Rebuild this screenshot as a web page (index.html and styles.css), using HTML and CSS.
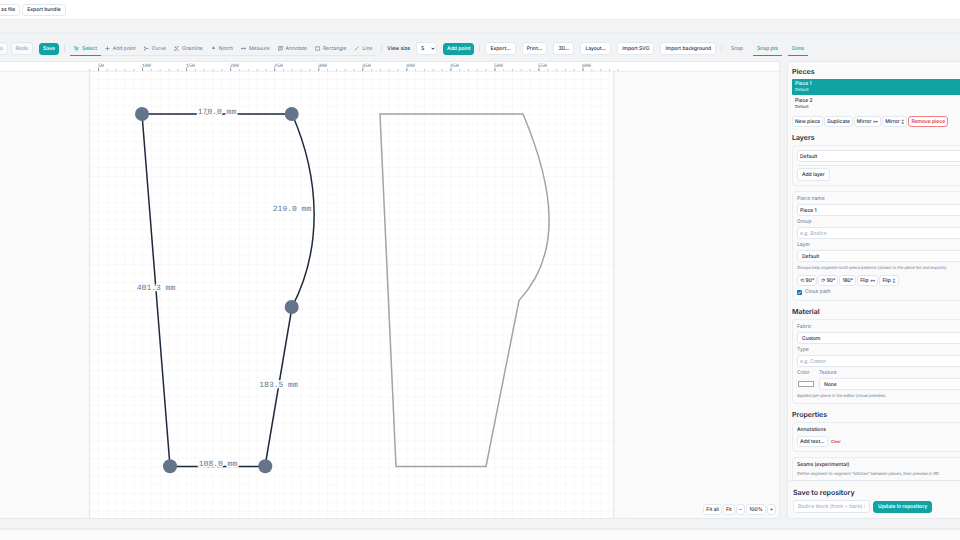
FILE: index.html
```html
<!DOCTYPE html>
<html lang="en">
<head>
<meta charset="utf-8">
<title>Pattern editor</title>
<link rel="stylesheet" href="styles.css">
</head>
<body>
<div class="app">
  <header class="topbar">
    <button class="btn">Save as file</button>
    <button class="btn">Export bundle</button>
  </header>
  <main class="editor">
    <div class="toolbar">
      <button class="btn btn-lg" disabled>Undo</button>
      <button class="btn btn-lg" disabled>Redo</button>
      <button class="btn btn-primary">Save</button>
      <span class="sep"></span>
      <nav class="tools">
        <button class="tool active"><svg viewBox="0 0 12 12"><path d="M1 1l3.500 9.500 1.800-4 4.200-1.700zM6.500 6.500l4 4"/></svg>Select</button>
        <button class="tool"><svg viewBox="0 0 12 12"><path d="M6 1v10M1 6h10"/></svg>Add point</button>
        <button class="tool"><svg viewBox="0 0 12 12"><path d="M1 1.500c1 3 3 4.500 10 4.500M1 10.500c1-3 3-4.500 6-4.500M1 1.500v3M1 10.500v-3"/></svg>Curve</button>
        <button class="tool"><svg viewBox="0 0 12 12"><path d="M2 11L10 1M2 2l3 2M7 9l3 1.500M1 11h3M8 1h3M3 2v3M9 7v3"/></svg>Grainline</button>
        <button class="tool"><svg viewBox="0 0 12 12"><path class="solid" d="M6 2l2.500 4h-5z"/></svg>Notch</button>
        <button class="tool"><svg viewBox="0 0 12 12"><path d="M1 6h10M3.500 3.500L1 6l2.500 2.500M8.500 3.500L11 6 8.500 8.500"/></svg>Measure</button>
        <button class="tool"><svg viewBox="0 0 12 12"><path d="M1 1h10v8H5l-3 2.500V9H1zM3.500 4h5M3.500 6.300h3"/></svg>Annotate</button>
        <button class="tool"><svg viewBox="0 0 12 12"><path d="M.7 2h10.600v8H.7z"/></svg>Rectangle</button>
        <button class="tool"><svg viewBox="0 0 12 12"><path d="M1.500 10.500l9-9"/></svg>Line</button>
      </nav>
      <span class="sep"></span>
      <label class="strong" for="size">View size</label>
      <div class="size"><select id="size"><option>S</option></select><svg viewBox="0 0 8 6"><path d="M1 1.500l3 3 3-3"/></svg></div>
      <button class="btn btn-primary">Add point</button>
      <span class="sep"></span>
      <button class="btn btn-lg">Export...</button>
      <button class="btn btn-lg">Print...</button>
      <button class="btn btn-lg">3D...</button>
      <button class="btn btn-lg">Layout...</button>
      <button class="btn btn-lg">Import SVG</button>
      <button class="btn btn-lg">Import background</button>
      <span class="sep"></span>
      <button class="toggle">Snap</button>
      <button class="toggle on">Snap pts</button>
      <button class="toggle on">Dims</button>
    </div>
    <div class="workspace">
      <section class="stage">
        <svg class="drawing" viewBox="-20 62 799 456" preserveAspectRatio="xMinYMin slice">
          <defs>
            <pattern id="grid" x="98" y="61.500" width="8.810" height="8.810" patternUnits="userSpaceOnUse"><path d="M0 .5h8.810M.5 0v8.810" stroke="#f7f8f9" stroke-width="1" fill="none"/></pattern>
            <pattern id="minor" x="98" y="0" width="8.810" height="100" patternUnits="userSpaceOnUse"><path d="M.4 69v2" stroke="#94a3b8" stroke-width=".6"/></pattern>
            <pattern id="major" x="98" y="0" width="44.050" height="100" patternUnits="userSpaceOnUse"><path d="M.4 67.500v4" stroke="#64748b" stroke-width=".7"/></pattern>
          </defs>
          <rect x="89.500" y="71" width="524" height="448" fill="#fff"/>
          <rect x="72" y="71" width="558" height="448" fill="url(#grid)"/>
          <path d="M89.500 71v448M613.500 71v448" stroke="#e6e8f0" stroke-width="1.300"/>
          <rect x="-20" y="61" width="800" height="10" fill="#fff"/>
          <path d="M-20 71.300h800" stroke="#e2e8f0" stroke-width=".7"/>
          <rect x="88" y="66" width="531" height="5" fill="url(#minor)"/>
          <rect x="97" y="66" width="521" height="5" fill="url(#major)"/>
          <g class="ruler">
            <text x="98" y="67">50</text><text x="142" y="67">100</text><text x="186" y="67">150</text><text x="230" y="67">200</text><text x="274" y="67">250</text><text x="318" y="67">300</text><text x="362" y="67">350</text><text x="406" y="67">400</text><text x="450" y="67">450</text><text x="494" y="67">500</text><text x="538" y="67">550</text><text x="582" y="67">600</text>
          </g>
          <path class="ghost" d="M380 114H523C555 190 562 254 519 300.500L486 466.500H396Z"/>
          <path class="outline" d="M142 114H292C321 180 322 250 292 307L265 466.500H170Z"/>
          <g class="node"><circle cx="142" cy="114" r="7"/><circle cx="291.700" cy="114" r="7"/><circle cx="291.700" cy="307" r="7"/><circle cx="265.300" cy="466.300" r="7"/><circle cx="170" cy="466.300" r="7"/></g>
          <g class="dim">
            <text x="217" y="114">170.0 mm</text><text x="292" y="211">219.0 mm</text><text x="156" y="290">401.3 mm</text><text x="278.500" y="387">183.5 mm</text><text x="218" y="466">108.0 mm</text>
          </g>
        </svg>
        <div class="zoombar">
          <button class="btn">Fit all</button><button class="btn">Fit</button><button class="btn">−</button><button class="btn">100%</button><button class="btn">+</button>
        </div>
      </section>
      <aside class="side">
        <div class="scroll">
          <h2>Pieces</h2>
          <ul class="pieces">
            <li class="current">Piece 1<small>Default</small></li>
            <li>Piece 2<small>Default</small></li>
          </ul>
          <div class="row">
            <button class="btn">New piece</button><button class="btn">Duplicate</button><button class="btn">Mirror <i>↔</i></button><button class="btn">Mirror <i>↕</i></button><button class="btn btn-danger">Remove piece</button>
          </div>
          <h2>Layers</h2>
          <div class="card">
            <input class="field" value="Default" aria-label="Layer name">
            <hr>
            <button class="btn btn-lg">Add layer</button>
          </div>
          <div class="card">
            <label for="pname">Piece name</label>
            <input class="field" id="pname" value="Piece 1">
            <label for="group">Group</label>
            <input class="field" id="group" placeholder="e.g. Bodice">
            <label for="layer">Layer</label>
            <select class="field" id="layer"><option>Default</option></select>
            <p class="help">Groups help organize multi-piece patterns (shown in the piece list and exports).</p>
            <div class="row">
              <button class="btn">⟲ 90°</button><button class="btn">⟳ 90°</button><button class="btn">180°</button><button class="btn">Flip <i>↔</i></button><button class="btn">Flip <i>↕</i></button>
            </div>
            <label class="check"><input type="checkbox" checked><svg viewBox="0 0 10 10"><path d="M2 5l2.200 2.200L8 3"/></svg>Close path</label>
          </div>
          <h2>Material</h2>
          <div class="card">
            <label for="fabric">Fabric</label>
            <select class="field" id="fabric"><option>Custom</option></select>
            <label for="type">Type</label>
            <input class="field" id="type" placeholder="e.g. Cotton">
            <div class="split">
              <div><label for="color">Color</label><input type="color" id="color" value="#ffffff"></div>
              <div class="grow"><label for="texture">Texture</label><select class="field" id="texture"><option>None</option></select></div>
            </div>
            <p class="help">Applied per-piece in the editor (visual preview).</p>
          </div>
          <h2>Properties</h2>
          <div class="card">
            <h3>Annotations</h3>
            <div class="row"><button class="btn">Add text...</button><button class="clear">Clear</button></div>
          </div>
          <div class="card">
            <h3>Seams (experimental)</h3>
            <p class="help">Define segment-to-segment “stitches” between pieces, then preview in 3D.</p>
            <div class="row seams"><button class="btn"></button><button class="btn wide"></button></div>
          </div>
        </div>
        <div class="savebox">
          <h2>Save to repository</h2>
          <div class="row">
            <input class="field repo" placeholder="Bodice block (front + back) (S)" aria-label="Pattern title">
            <button class="btn btn-primary">Update in repository</button>
          </div>
        </div>
      </aside>
    </div>
  </main>
  <footer class="bottom"></footer>
</div>
</body>
</html>
```
FILE: styles.css
```css
* { box-sizing: border-box; margin: 0; padding: 0; }
body { font: 500 5px/6px Inter, sans-serif; color: #1e293b; background: #fafafa; overflow: hidden; text-rendering: geometricPrecision; }
button, input, select { font: inherit; color: inherit; text-rendering: inherit; }
i { font-style: normal; font-size: 4px; }
.app { margin: 0 -60px 0 -20px; height: 100vh; display: flex; flex-direction: column; background: #f1f3f5; }
.topbar { height: 20px; padding: 0 3px; display: flex; align-items: center; gap: 2px; background: #fff; border-bottom: 1px solid #e8ebef; flex: none; }
.btn { height: 11px; padding: 1px 2px 0; border: 1px solid #e2e8f0; border-radius: 3px; background: #fff; white-space: nowrap; flex: none; }
.topbar .btn { height: 12px; padding: 0 4px; }
.btn-lg { height: 13px; padding: 0 4px; }
.btn:disabled { color: #94a3b8; background: #f8fafc; }
.btn-primary { height: 12px; padding: 0 3px; border-color: #0fa3a3; background: #0fa3a3; color: #fff; font-weight: 600; }
.btn-danger { color: #dc2626; border-color: #ef8080; }
.editor { flex: 1; min-height: 0; margin-top: 12px; padding-bottom: 9px; border-top: 1px solid #eceff2; display: flex; flex-direction: column; }
.toolbar { height: 28px; margin-left: 5px; padding: 3px 9px 0 0; display: flex; align-items: center; gap: 6px; flex: none; }
.toolbar > .btn-lg + .btn-lg:disabled { margin-left: -3px; }
.sep { width: 1px; height: 7px; margin: 0 -1px; background: #dbe1e8; flex: none; }
.tools { display: flex; border-bottom: 1px solid #e2e8f0; height: 14px; }
.tool { display: flex; align-items: center; gap: 3px; padding: 1px 4px 0; border: 0; background: none; color: #64748b; height: 14px; border-bottom: 1px solid transparent; white-space: nowrap; font-weight: 400; }
.tool svg { width: 5px; height: 5px; fill: none; stroke: currentColor; stroke-width: 1.5; }
.tool .solid { fill: currentColor; }
.tool.active { color: #0fa3a3; border-color: #0fa3a3; font-weight: 500; }
.strong { white-space: nowrap; }
select { appearance: none; }
.size { position: relative; flex: none; }
.size select { display: block; width: 21px; height: 13px; border: 1px solid #e2e8f0; border-radius: 3px; background: #fff; padding: 0 4px; }
.size svg { position: absolute; right: 2px; top: 5px; width: 4px; height: 3px; fill: none; stroke: #1e293b; stroke-width: 2; }
.toggle { height: 14px; padding: 1px 4px 0; border: 0; border-bottom: 1px solid transparent; background: none; color: #64748b; white-space: nowrap; font-weight: 400; }
.toggle.on { color: #0fa3a3; border-color: #0fa3a3; font-weight: 500; }
.workspace { flex: 1; min-height: 0; display: grid; grid-template-columns: 1fr 233px; gap: 7px; }
.stage, .side { border: 1px solid #e6eaef; border-radius: 4px; background: #fafafa; overflow: hidden; min-height: 0; position: relative; }
.stage { border-left: 0; }
.drawing { display: block; width: 100%; height: 100%; }
.ruler text { font: 400 5px "Liberation Mono", monospace; fill: #64748b; }
.ghost { fill: none; stroke: #a3a3a8; stroke-width: 1.5; }
.outline { fill: none; stroke: #1e293b; stroke-width: 1.5; }
.node { fill: #64748b; }
.dim text { font: 400 8px "Liberation Mono", monospace; text-anchor: middle; fill: #64748b; stroke: #fff; stroke-width: 3; paint-order: stroke; }
.zoombar { position: absolute; right: 3px; bottom: 3px; display: flex; gap: 1px; }
.zoombar .btn { min-width: 9px; }
.side { display: flex; flex-direction: column; }
.scroll { flex: 1; min-height: 0; overflow: hidden; padding: 6px 4px 0; }
h2 { font: 600 7px/8px Inter, sans-serif; margin: 7px 0 3px; }
.scroll > h2:first-child { margin-top: 0; }
h3 { font: 500 5px/6px Inter, sans-serif; margin-bottom: 3px; }
.pieces { list-style: none; display: grid; gap: 1px; margin: 3px 0 4px; }
.pieces li { height: 16px; padding: 2px 3px; border-radius: 1px; }
.pieces .current { background: #0fa3a3; color: #fff; }
.pieces small { display: block; font: 400 4px/5px Inter, sans-serif; }
.row { display: flex; align-items: center; gap: 1px; }
.card { border: 1px solid #e9ecf0; border-radius: 4px; padding: 4px; margin-bottom: 5px; }
.card label { display: block; color: #64748b; font-weight: 400; line-height: 7px; margin: 0 0 1px; }
.field { display: block; width: 100%; height: 12px; padding: 1px 2px 0; border: 1px solid #e2e8f0; border-radius: 3px; background: #fff; margin-bottom: 3px; }
.field::placeholder { color: #94a3b8; opacity: 1; font-weight: 400; }
select.field { padding: 1px 4px 0; }
hr { border: 0; border-top: 1px solid #e9ecf0; margin-bottom: 2px; }
.help { font: 400 4px/6px Inter, sans-serif; color: #64748b; }
.help + .row { margin: 4px 0 3px; }
.card .check { display: flex; align-items: center; gap: 3px; margin: 0; position: relative; }
.check input { appearance: none; width: 5px; height: 5px; border-radius: 1px; background: #0b76c8; }
.check svg { position: absolute; left: 0; top: 1px; width: 5px; height: 5px; fill: none; stroke: #fff; stroke-width: 2; }
.split { display: flex; gap: 4px; }
.split .grow { flex: 1; }
.split input { appearance: none; width: 18px; height: 12px; padding: 3px 1px; border: 0; background: none; display: block; }
.split input::-webkit-color-swatch-wrapper { padding: 0; }
.split input::-webkit-color-swatch { border: 1px solid #a3a3a3; }
.clear { border: 0; background: none; color: #dc2626; font-size: 4px; padding: 0 2px; }
.row.seams { gap: 3px; }
.seams .btn { width: 17px; }
.seams .wide { width: 28px; }
.savebox { flex: none; height: 38px; padding: 1px 5px 0; border-top: 1px solid #e2e8f0; border-radius: 4px; background: #fafafa; }
.savebox .row { gap: 3px; }
.savebox .repo { width: 77px; height: 13px; margin: 0; padding: 0 4px; }
.savebox .btn-primary { padding: 0 4px; }
.bottom { height: 12px; flex: none; border-top: 2px solid #e8ebee; background: #fafafa; }
```
